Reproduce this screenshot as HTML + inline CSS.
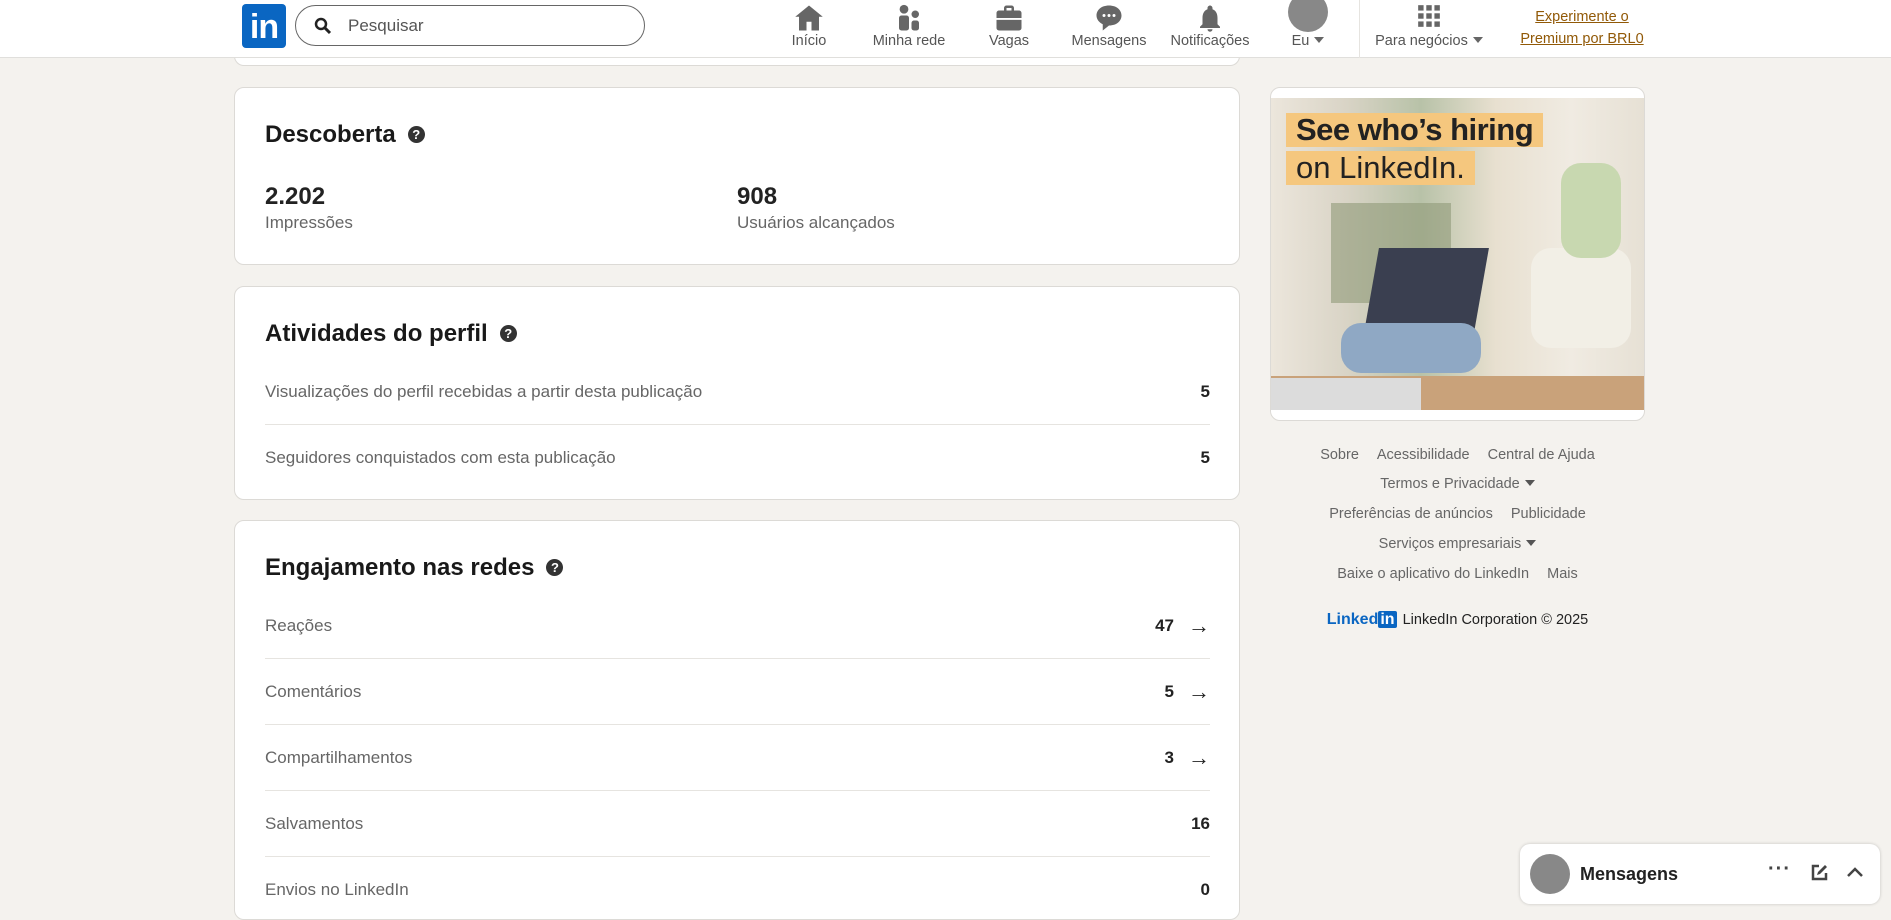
<!DOCTYPE html>
<html><head><meta charset="utf-8"><style>
*{margin:0;padding:0;box-sizing:border-box}
body{width:1891px;height:895px;overflow:hidden;background:#f4f2ee;font-family:"Liberation Sans",sans-serif;color:rgba(0,0,0,.9);position:relative}
.hdr{position:absolute;left:0;top:0;width:1891px;height:58px;background:#fff;border-bottom:1px solid #e0dfdc;z-index:5}
.logo{position:absolute;left:242px;top:4px;width:44px;height:44px;background:#0a66c2;border-radius:4px;color:#fff;font-weight:bold;font-size:34px;line-height:46px;text-align:center;letter-spacing:-1px}
.search{position:absolute;left:295px;top:5px;width:350px;height:41px;border:1px solid #666;border-radius:21px;font-size:17px;color:#555;padding-left:52px;line-height:40px}
.nav{position:absolute;top:0;width:110px;margin-left:-55px;text-align:center;font-size:14.5px;color:#555}
.nav svg{display:block;margin:3px auto 0}
.nav span{position:absolute;top:33px;left:0;width:110px}
.card{position:absolute;left:234px;width:1006px;background:#fff;border:1px solid #dcdad6;border-radius:10px}
.t{position:absolute;left:265px;font-size:24px;font-weight:bold;color:rgba(0,0,0,.9)}
.q{display:inline-block;width:17px;height:17px;border-radius:50%;background:#333;color:#fff;font-size:13px;line-height:17px;text-align:center;vertical-align:3px;margin-left:12px}
.row{position:absolute;left:265px;width:945px;font-size:17px;color:#666}
.row b{position:absolute;right:0;top:0;color:#222;font-weight:bold}
.row i{position:absolute;right:0;top:-3px;color:#222;font-style:normal;font-weight:bold;font-size:22px}
.div{position:absolute;left:265px;width:945px;height:1px;background:#e6e4e0}
.ft{position:absolute;left:1270px;width:375px;text-align:center;font-size:14.5px;color:#666}
.ft span{margin:0 9px}
.tri{display:inline-block;border-left:5px solid transparent;border-right:5px solid transparent;border-top:6px solid #555;vertical-align:2px;margin-left:5px}
</style></head><body>
<div class="hdr">
<div class="logo">in</div>
<div class="search"><svg style="position:absolute;left:18px;top:11px" width="18" height="18" viewBox="0 0 18 18"><circle cx="7" cy="7" r="5" fill="none" stroke="#222" stroke-width="2.5"/><path d="M11 11l5 5" stroke="#222" stroke-width="3"/></svg>Pesquisar</div>
<div class="nav" style="left:809px"><svg width="30" height="30" viewBox="0 0 24 24"><path d="M12 2L1 11h3v11h6v-7h4v7h6V11h3z" fill="#666"/></svg><span>Início</span></div>
<div class="nav" style="left:909px"><svg width="30" height="30" viewBox="0 0 24 24"><circle cx="8" cy="5" r="3.5" fill="#666"/><circle cx="17" cy="9" r="3" fill="#666"/><rect x="4" y="10" width="8" height="12" rx="2" fill="#666"/><rect x="14" y="14" width="6" height="8" rx="2" fill="#666"/></svg><span>Minha rede</span></div>
<div class="nav" style="left:1009px"><svg width="30" height="30" viewBox="0 0 24 24"><path d="M8 6V4a2 2 0 012-2h4a2 2 0 012 2v2h4a2 2 0 012 2v12a2 2 0 01-2 2H4a2 2 0 01-2-2V8a2 2 0 012-2zm2 0h4V4h-4z" fill="#666"/><rect x="2" y="12" width="20" height="1.5" fill="#fff"/></svg><span>Vagas</span></div>
<div class="nav" style="left:1109px"><svg width="30" height="30" viewBox="0 0 24 24"><path d="M12 2C6 2 2 5.5 2 10c0 3 2 5.5 5 7v5l5-4c6 0 10-3.5 10-8S18 2 12 2z" fill="#666"/><circle cx="8" cy="10" r="1.2" fill="#fff"/><circle cx="12" cy="10" r="1.2" fill="#fff"/><circle cx="16" cy="10" r="1.2" fill="#fff"/></svg><span>Mensagens</span></div>
<div class="nav" style="left:1210px"><svg width="30" height="30" viewBox="0 0 24 24"><path d="M12 2c-1 0-2 1-2 2v1C7 6 6 9 6 12v5l-2 2v1h16v-1l-2-2v-5c0-3-1-6-4-7V4c0-1-1-2-2-2zM10 21h4a2 2 0 01-4 0z" fill="#666"/></svg><span>Notificações</span></div>
<div class="nav" style="left:1308px"><div style="width:40px;height:40px;border-radius:50%;background:#888;margin:-8px auto 0"></div><span>Eu<i class="tri" style="border-top-color:#666"></i></span></div>
<div style="position:absolute;left:1359px;top:0;width:1px;height:58px;background:#e6e4e0"></div>
<div class="nav" style="left:1429px;width:130px;margin-left:-65px"><svg width="26" height="26" viewBox="0 0 24 24" style="margin-top:3px"><g fill="#666"><rect x="2" y="2" width="5" height="5"/><rect x="9.5" y="2" width="5" height="5"/><rect x="17" y="2" width="5" height="5"/><rect x="2" y="9.5" width="5" height="5"/><rect x="9.5" y="9.5" width="5" height="5"/><rect x="17" y="9.5" width="5" height="5"/><rect x="2" y="17" width="5" height="5"/><rect x="9.5" y="17" width="5" height="5"/><rect x="17" y="17" width="5" height="5"/></g></svg><span style="width:130px">Para negócios<i class="tri" style="border-top-color:#666"></i></span></div>
<div style="position:absolute;left:1512px;top:6px;width:140px;text-align:center;font-size:14.5px;line-height:22px;color:#915907;text-decoration:underline">Experimente o<br>Premium por BRL0</div>
</div>

<div class="card" style="top:40px;height:26px;border-top:none;border-radius:0 0 10px 10px"></div>

<div class="card" style="top:87px;height:178px"></div>
<div class="t" style="top:121px">Descoberta<span class="q">?</span></div>
<div style="position:absolute;left:265px;top:183px;font-size:24px;font-weight:bold;color:#222">2.202</div>
<div style="position:absolute;left:265px;top:213px;font-size:17px;color:#666">Impressões</div>
<div style="position:absolute;left:737px;top:183px;font-size:24px;font-weight:bold;color:#222">908</div>
<div style="position:absolute;left:737px;top:213px;font-size:17px;color:#666">Usuários alcançados</div>

<div class="card" style="top:286px;height:214px"></div>
<div class="t" style="top:320px">Atividades do perfil<span class="q">?</span></div>
<div class="row" style="top:382px">Visualizações do perfil recebidas a partir desta publicação<b>5</b></div>
<div class="div" style="top:424px"></div>
<div class="row" style="top:448px">Seguidores conquistados com esta publicação<b>5</b></div>

<div class="card" style="top:520px;height:400px"></div>
<div class="t" style="top:554px">Engajamento nas redes<span class="q">?</span></div>
<div class="row" style="top:616px">Reações<b style="right:36px">47</b><i>→</i></div>
<div class="div" style="top:658px"></div>
<div class="row" style="top:682px">Comentários<b style="right:36px">5</b><i>→</i></div>
<div class="div" style="top:724px"></div>
<div class="row" style="top:748px">Compartilhamentos<b style="right:36px">3</b><i>→</i></div>
<div class="div" style="top:790px"></div>
<div class="row" style="top:814px">Salvamentos<b>16</b></div>
<div class="div" style="top:856px"></div>
<div class="row" style="top:880px">Envios no LinkedIn<b>0</b></div>

<div style="position:absolute;left:1270px;top:87px;width:375px;height:334px;background:#fff;border:1px solid #dcdad6;border-radius:10px;overflow:hidden">
<div style="position:absolute;left:0;top:10px;width:375px;height:312px;background:linear-gradient(90deg,#ece6dc 0%,#d9d4c6 20%,#b8c2a8 40%,#e8e0d0 60%,#f0ebe2 80%,#e6e0d4 100%)">
<div style="position:absolute;left:60px;top:105px;width:120px;height:100px;background:#8f9a78;opacity:.6"></div>
<div style="position:absolute;left:100px;top:150px;width:110px;height:90px;background:#3a3f50;transform:skewX(-10deg)"></div>
<div style="position:absolute;left:70px;top:225px;width:140px;height:50px;background:#8fa8c4;border-radius:20px"></div>
<div style="position:absolute;left:260px;top:150px;width:100px;height:100px;background:#f2efe6;border-radius:20px"></div>
<div style="position:absolute;left:290px;top:65px;width:60px;height:95px;background:#c8d8b0;border-radius:20px"></div>
<div style="position:absolute;left:0;top:278px;width:375px;height:34px;background:#c9a27a"></div>
<div style="position:absolute;left:0;top:280px;width:150px;height:32px;background:#dcdcdc"></div>
</div>
<div style="position:absolute;left:15px;top:25px;background:#f5c77e;padding:0 10px;font-size:31px;line-height:34px;font-weight:bold;color:#222;letter-spacing:-0.5px">See who’s hiring</div>
<div style="position:absolute;left:15px;top:63px;background:#f5c77e;padding:0 10px;font-size:31px;line-height:34px;color:#222">on LinkedIn.</div>
</div>

<div class="ft" style="top:447px"><span>Sobre</span><span>Acessibilidade</span><span>Central de Ajuda</span></div>
<div class="ft" style="top:476px">Termos e Privacidade<i class="tri"></i></div>
<div class="ft" style="top:506px"><span>Preferências de anúncios</span><span>Publicidade</span></div>
<div class="ft" style="top:536px">Serviços empresariais<i class="tri"></i></div>
<div class="ft" style="top:566px"><span>Baixe o aplicativo do LinkedIn</span><span>Mais</span></div>
<div class="ft" style="top:611px;color:#222"><b style="color:#0a66c2;font-size:16px">Linked<span style="background:#0a66c2;color:#fff;padding:0 2px;margin:0 2px 0 0;border-radius:2px">in</span></b> LinkedIn Corporation © 2025</div>

<div style="position:absolute;left:1520px;top:844px;width:360px;height:60px;background:#fff;border-radius:10px;box-shadow:0 0 3px rgba(0,0,0,.2)">
<div style="position:absolute;left:10px;top:10px;width:40px;height:40px;border-radius:50%;background:#888"></div>
<div style="position:absolute;left:60px;top:20px;font-size:18px;font-weight:bold;color:#222">Mensagens</div>
<div style="position:absolute;left:248px;top:14px;font-size:20px;font-weight:bold;color:#444;letter-spacing:1px">···</div>
<svg style="position:absolute;left:290px;top:20px" width="18" height="18" viewBox="0 0 18 18"><path d="M9 2H3v13h13V9" fill="none" stroke="#444" stroke-width="2.5"/><path d="M7 11l1-3 7-7 2 2-7 7z" fill="#444"/></svg>
<svg style="position:absolute;left:326px;top:22px" width="18" height="12" viewBox="0 0 18 12"><path d="M2 10l7-7 7 7" fill="none" stroke="#444" stroke-width="2.5"/></svg>
</div>
</body></html>
